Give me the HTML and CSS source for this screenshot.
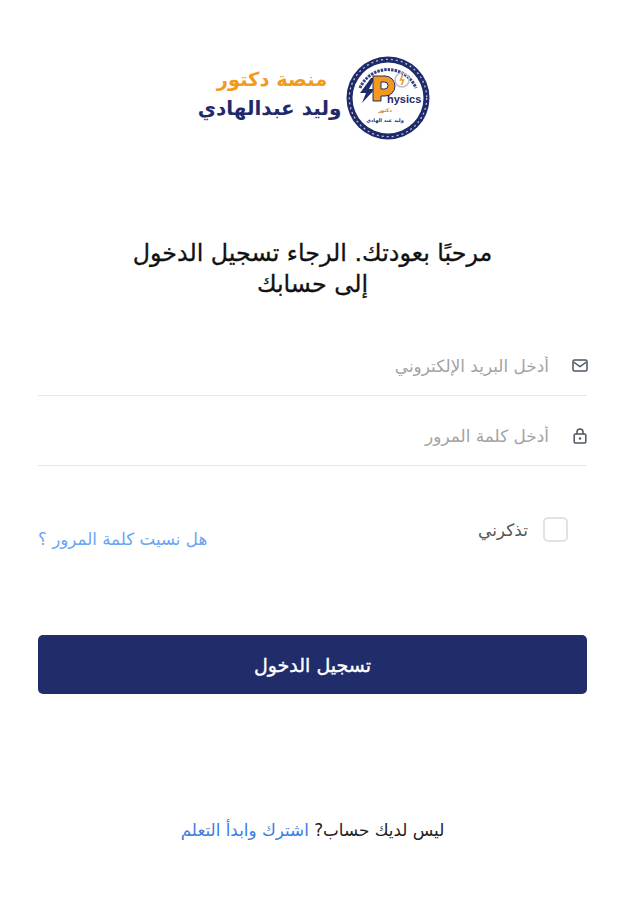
FILE: index.html
```html
<!DOCTYPE html>
<html lang="ar" dir="rtl">
<head>
<meta charset="utf-8">
<title>تسجيل الدخول</title>
<link rel="stylesheet" href="styles.css">
</head>
<body>
<main class="page">
  <div class="logo" dir="ltr">
    <div class="logo-text" dir="rtl">
      <span class="logo-top">منصة دكتور</span>
      <span class="logo-bottom">وليد عبدالهادي</span>
    </div>
    <svg class="logo-mark" width="84" height="84" viewBox="0 0 84 84" aria-hidden="true">
      <circle cx="42" cy="42" r="41.5" fill="#1f2a6b"/>
      <circle cx="42" cy="42" r="35.5" fill="#fff"/>
      <circle cx="42" cy="42" r="38.7" fill="none" stroke="#fff" stroke-width="1.300" stroke-dasharray="2 3" opacity=".7"/>
      <path d="M14 32 A30.500 30.500 0 0 1 70 32" fill="none" stroke="#39427c" stroke-width="3" stroke-dasharray="2.500 1"/>
      <path d="M25 22 L14 37 L20 37 L16 47 L29 33 L23 33 L29 22 Z" fill="#1f2a6b"/>
      <path d="M27 20 H39 a10 10 0 0 1 0 20 H35 V45 H27 Z M35 26 V33 H38.500 a3.500 3.500 0 0 0 0 -7 Z" fill="#f39a1c" stroke="#1f2a6b" stroke-width="1"/>
      <circle cx="56" cy="24" r="7" fill="none" stroke="#b9c0cf" stroke-width="1.600"/>
      <path d="M56.500 19 L54.500 24 H57.500 L55.500 29" fill="none" stroke="#f39a1c" stroke-width="1.600"/>
      <text class="mark-name" x="41" y="47" dir="ltr">hysics</text>
      <text class="mark-orange" x="39" y="56" text-anchor="middle">دكتور</text>
      <text class="mark-navy" x="39" y="66" text-anchor="middle">وليد عبد الهادي</text>
    </svg>
  </div>

  <h1 class="title">مرحبًا بعودتك. الرجاء تسجيل الدخول<br>إلى حسابك</h1>

  <form class="form">
    <label class="field">
      <svg class="field-icon" width="18" height="18" viewBox="0 0 18 18" aria-hidden="true">
        <rect x="2" y="3" width="14" height="11" rx="1.500" fill="none" stroke="#4b5563" stroke-width="1.500"/>
        <path d="M2.500 5 L9 9.500 L15.500 5" fill="none" stroke="#4b5563" stroke-width="1.500"/>
      </svg>
      <input class="field-input" type="email" placeholder="أدخل البريد الإلكتروني">
    </label>
    <label class="field">
      <svg class="field-icon" width="18" height="18" viewBox="0 0 18 18" aria-hidden="true">
        <rect x="3.200" y="7" width="11.600" height="9" rx="1.200" fill="none" stroke="#4b5563" stroke-width="1.500"/>
        <path d="M6 7 V5 a3 3 0 0 1 6 0 V7" fill="none" stroke="#4b5563" stroke-width="1.500"/>
        <circle cx="9" cy="11.500" r="1.200" fill="#4b5563"/>
      </svg>
      <input class="field-input" type="password" placeholder="أدخل كلمة المرور">
    </label>

    <div class="options">
      <label class="remember">
        <span class="checkbox"></span>
        <span>تذكرني</span>
      </label>
      <a class="forgot" href="#">هل نسيت كلمة المرور ؟</a>
    </div>

    <button class="submit" type="button">تسجيل الدخول</button>
  </form>

  <p class="signup">ليس لديك حساب? <a href="#">اشترك وابدأ التعلم</a></p>
</main>
</body>
</html>
```

FILE: styles.css
```css
* { box-sizing: border-box; }
html, body { margin: 0; background: #fff; }
body {
  font-family: "DejaVu Sans", sans-serif;
  color: #1a1a1a;
  height: 900px;
  overflow: hidden;
}
.page { padding: 56px 37px 0 38px; }
.logo {
  display: flex;
  justify-content: center;
  align-items: center;
  gap: 5px;
  height: 84px;
  padding-left: 3px;
}
.logo-mark { flex: none; }
.mark-name { font: 700 11px "Liberation Sans", sans-serif; fill: #1f2a6b; }
.mark-orange { font: 700 5px "DejaVu Sans", sans-serif; fill: #c9791a; }
.mark-navy { font: 700 5px "DejaVu Sans", sans-serif; fill: #1f2a6b; }
.logo-text {
  display: flex;
  flex-direction: column;
  font-weight: 700;
  padding-bottom: 8px;
}
.logo-top {
  align-self: flex-start;
  margin-right: 14px;
  color: #f39a1c;
  font-size: 19.5px;
  line-height: 28px;
}
.logo-bottom { color: #1f2a6b; font-size: 20px; line-height: 28px; }
.title {
  margin: 98px 0 0;
  font-size: 23.8px;
  font-weight: 500;
  line-height: 31px;
  text-align: center;
  color: #111;
  -webkit-text-stroke: .3px #111;
}
.form { margin-top: 26px; }
.field {
  display: flex;
  align-items: center;
  gap: 22px;
  height: 70px;
  border-bottom: 1px solid #e7e7e7;
  padding: 11px 0 0;
}
.field-icon { margin-right: -2px; flex: none; }
.field-input {
  flex: 1;
  min-width: 0;
  border: 0;
  outline: 0;
  padding: 0;
  background: transparent;
  font: inherit;
  font-size: 16.9px;
}
.field-input::placeholder { color: #a3a3a3; opacity: 1; }
.options {
  display: flex;
  justify-content: space-between;
  align-items: flex-start;
  margin-top: 51px;
}
.remember {
  display: flex;
  align-items: center;
  gap: 15px;
  font-size: 17px;
  color: #555;
  margin-right: 19px;
}
.checkbox {
  width: 25px;
  height: 25px;
  border: 2px solid #e2e2e2;
  border-radius: 5px;
  background: #fff;
}
.forgot {
  margin-top: 12px;
  font-size: 16.7px;
  line-height: 20px;
  color: #6ba4f2;
  text-decoration: none;
}
.submit {
  display: block;
  width: 100%;
  height: 59px;
  margin-top: 86px;
  border: 0;
  border-radius: 5px;
  background: #212d6b;
  color: #fff;
  font: inherit;
  font-size: 19px;
  font-weight: 400;
  -webkit-text-stroke: .4px #fff;
}
.signup {
  margin: 124px 0 0;
  text-align: center;
  font-size: 16.8px;
  line-height: 24px;
  color: #222;
}
.signup a { color: #3b7de0; text-decoration: none; }
```
